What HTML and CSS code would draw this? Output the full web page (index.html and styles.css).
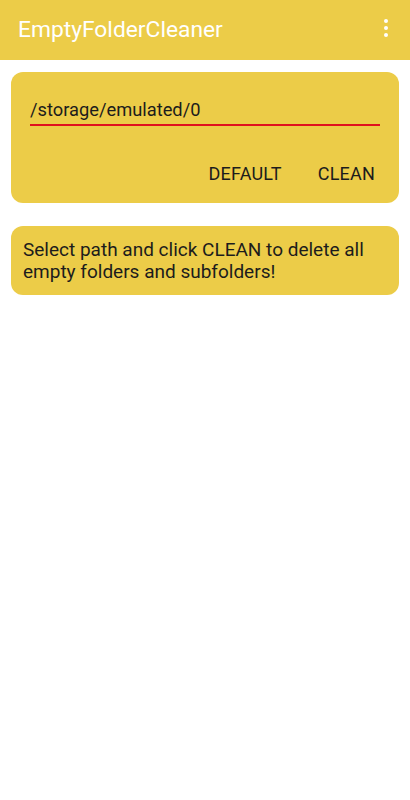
FILE: index.html
```html
<!DOCTYPE html>
<html>
<head>
<meta charset="utf-8">
<link rel="stylesheet" href="styles.css">
</head>
<body>
<header class="appbar">
  <div class="title">EmptyFolderCleaner</div>
  <div class="menu"><span></span><span></span><span></span></div>
</header>
<main class="content">
  <section class="card path-card">
    <div class="field">/storage/emulated/0</div>
    <div class="actions">
      <button class="btn">DEFAULT</button>
      <button class="btn">CLEAN</button>
    </div>
  </section>
  <section class="card info-card">
    Select path and click CLEAN to delete all empty folders and subfolders!
  </section>
</main>
</body>
</html>
```
FILE: styles.css
```css
* { box-sizing: border-box; }
html, body { margin: 0; padding: 0; background: #fff; }
body { font-family: Roboto, "Noto Sans", sans-serif; width: 410px; height: 800px; }
.appbar {
  height: 60px;
  background: #ECCC48;
  display: flex;
  align-items: center;
  justify-content: space-between;
  padding: 0 22px 0 18px;
}
.title { color: #fff; font-size: 22.8px; letter-spacing: 0; line-height: 28px; }
.menu { display: flex; flex-direction: column; gap: 3px; padding-bottom: 4px; }
.menu span { width: 4px; height: 4px; border-radius: 50%; background: #fff; display: block; }
.content { padding: 12px 11px; display: flex; flex-direction: column; gap: 23px; }
.card { background: #ECCC48; border-radius: 12px; }
.path-card { padding: 26px 19px 0 19px; height: 131px; }
.field {
  font-size: 18.3px;
  color: #1c1c1c;
  padding: 0 0 2px 0;
  border-bottom: 2px solid #E0101E;
  line-height: 24px;
}
.actions { display: flex; justify-content: flex-end; gap: 36px; margin-top: 37px; padding-right: 5px; }
.btn {
  background: none; border: none; padding: 0; margin: 0;
  font-family: Roboto, sans-serif; font-size: 18px; line-height: 22px; color: #1c1c1c; letter-spacing: 0.2px;
}
.info-card { padding: 13px 12px 0 12px; font-size: 19px; line-height: 22px; color: #1c1c1c; height: 69px; }
```
